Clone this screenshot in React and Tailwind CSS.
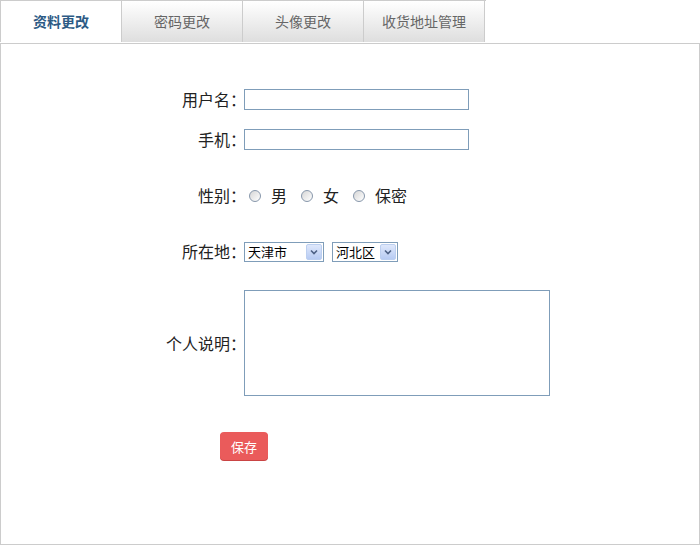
import React from 'react';

const font = { fontFamily: '"Noto Sans CJK SC", "Liberation Sans", sans-serif' };

const tabs = ['资料更改', '密码更改', '头像更改', '收货地址管理'];

const Radio = ({ label }) => (
  <label className="flex items-center mr-[14px]">
    <span className="w-[12px] h-[12px] rounded-full border border-[#8797ab] bg-gradient-to-br from-[#d6d6d6] to-[#ffffff] mr-[10px]" />
    <span>{label}</span>
  </label>
);

const FakeSelect = ({ value, width }) => (
  <div className={`flex items-center justify-between h-[20px] border border-[#7f9db9] bg-white pl-[3px] pr-[1px] text-[13px] text-black ${width}`}>
    <span className="leading-none">{value}</span>
    <span className="w-[16px] h-[16px] flex items-center justify-center rounded-[2px] border border-[#bccff0] bg-gradient-to-b from-[#dfe8fb] to-[#b7cbf3]">
      <svg width="8" height="6" viewBox="0 0 8 6">
        <path d="M1 1.5 L4 4.5 L7 1.5" stroke="#4d6185" strokeWidth="1.6" fill="none" />
      </svg>
    </span>
  </div>
);

const Row = ({ label, children, className = '' }) => (
  <div className={`flex items-center ${className}`}>
    <div className="w-[242px] flex justify-end shrink-0">
      <span>{label}</span>
      <span className="w-[13px] text-left">：</span>
    </div>
    <div className="ml-[1px] flex items-center">{children}</div>
  </div>
);

export default function App() {
  return (
    <div className="w-[700px] h-[545px] bg-white text-[#222]" style={font}>
      <div className="flex w-[486px] h-[42px] border-t border-l border-[#cccccc] text-[14px]">
        {tabs.map((t, i) => (
          <div
            key={t}
            className={
              i === 0
                ? 'w-[121px] h-full flex items-center justify-center bg-white border-r border-[#cccccc] font-bold text-[#2d5b85]'
                : 'w-[121px] h-[41px] flex items-center justify-center border-r border-[#cccccc] bg-gradient-to-b from-[#ffffff] to-[#dedede] text-[#666666]'
            }
          >
            {t}
          </div>
        ))}
      </div>
      <div className="mt-px h-[502px] border border-[#cccccc] pt-[45px] text-[16px] leading-[21px]">
        <Row label="用户名" className="h-[21px]">
          <input className="w-[225px] h-[21px] border border-[#7f9db9] outline-none" />
        </Row>
        <Row label="手机" className="mt-[19px] h-[21px]">
          <input className="w-[225px] h-[21px] border border-[#7f9db9] outline-none" />
        </Row>
        <Row label="性别" className="mt-[35px] h-[21px]">
          <div className="flex items-center pl-[5px]">
            <Radio label="男" />
            <Radio label="女" />
            <Radio label="保密" />
          </div>
        </Row>
        <Row label="所在地" className="mt-[35px] h-[21px]">
          <FakeSelect value="天津市" width="w-[80px]" />
          <div className="ml-[8px]">
            <FakeSelect value="河北区" width="w-[66px]" />
          </div>
        </Row>
        <Row label="个人说明" className="mt-[28px]">
          <textarea className="w-[306px] h-[106px] border border-[#7f9db9] outline-none resize-none" />
        </Row>
        <div className="mt-[36px] pl-[219px]">
          <button className="w-[48px] h-[28px] rounded-[4px] bg-[#ea5b5b] shadow-[0_1px_0_#c94444] text-white text-[13px]">
            保存
          </button>
        </div>
      </div>
    </div>
  );
}
